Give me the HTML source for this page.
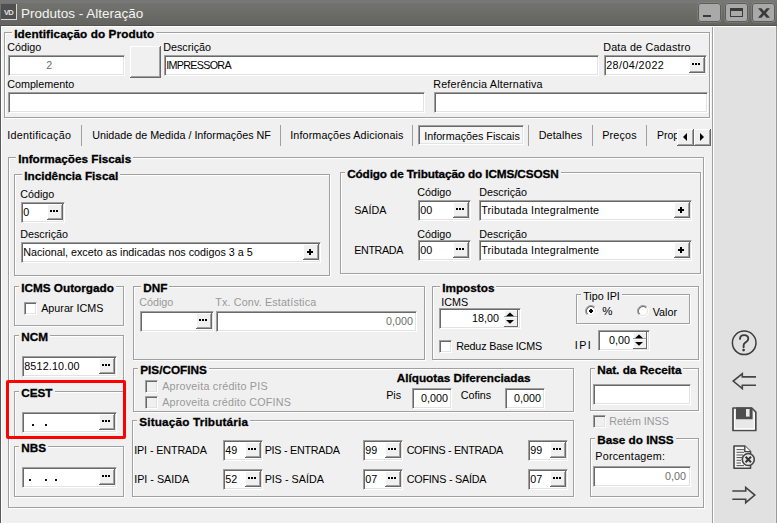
<!DOCTYPE html><html><head><meta charset="utf-8"><style>
*{box-sizing:border-box}
html,body{margin:0;padding:0}
body{width:777px;height:523px;overflow:hidden;position:relative;background:#f0f0f0;font-family:"Liberation Sans",sans-serif;font-size:10.75px;color:#000}
.t,.gt{position:absolute;white-space:nowrap;line-height:1}
.gt{background:#f0f0f0;padding:0 2px}
.gb{position:absolute;border:1px solid #a0a0a0;box-shadow:inset 1px 1px 0 #fff,1px 1px 0 #fff}
.in{position:absolute;background:#fff;border-top:1px solid #a0a0a0;border-left:1px solid #a0a0a0;border-right:1px solid #fff;border-bottom:1px solid #fff;box-shadow:inset 1px 1px 0 #696969,inset -1px -1px 0 #e3e3e3}
.bt{position:absolute;background:#f0f0f0;border-right:1px solid #696969;border-bottom:1px solid #696969;box-shadow:inset 1px 1px 0 #fff,inset -1px -1px 0 #a0a0a0}
.bt i{position:absolute;background:#000;display:block}
.bt .d1,.bt .d2,.bt .d3{width:2px;height:2px;top:6px}
.bt .d1{left:3px}.bt .d2{left:6px}.bt .d3{left:9px}
.bt .ph{left:4px;top:7px;width:6px;height:2px}
.bt .pv{left:6px;top:5px;width:2px;height:6px}
.cb{position:absolute;width:13px;height:13px;background:#fff;border-top:1px solid #a0a0a0;border-left:1px solid #a0a0a0;border-right:1px solid #fff;border-bottom:1px solid #fff;box-shadow:inset 1px 1px 0 #696969,inset -1px -1px 0 #e3e3e3}
.cb.dis{background:#f0f0f0}
.a{position:absolute}
</style></head><body>
<div class="a" style="left:0;top:0;width:777px;height:25px;background:linear-gradient(#777777 0px,#777777 3px,#72736e 3px,#636460 25px)"></div>
<div class="a" style="left:0;top:25px;width:777px;height:1px;background:#535450"></div>
<div class="a" style="left:0;top:26px;width:777px;height:1px;background:#fff"></div>
<div class="a" style="left:1px;top:4px;width:16px;height:16px;background:#505050;border-right:1px solid #d8d8d8;border-bottom:1px solid #d8d8d8"></div>
<div class="t" style="left:4px;top:8.6px;font-size:7.6px;font-weight:bold;color:#e0e0e0;letter-spacing:-0.9px">VD</div>
<div class="t" style="left:21px;top:6.5px;font-size:13.5px;color:#f4f4f4">Produtos - Alteração</div>
<div class="a" style="left:698px;top:3px;width:23px;height:19px;background:#a9a9a9;border:1px solid #5c5c59;border-radius:3px;box-shadow:0 0 0 0.5px #8a8a87"></div>
<div class="a" style="left:725px;top:3px;width:23px;height:19px;background:#a9a9a9;border:1px solid #5c5c59;border-radius:3px;box-shadow:0 0 0 0.5px #8a8a87"></div>
<div class="a" style="left:752px;top:3px;width:23px;height:19px;background:#a9a9a9;border:1px solid #5c5c59;border-radius:3px;box-shadow:0 0 0 0.5px #8a8a87"></div>
<div class="a" style="left:703px;top:15px;width:8px;height:2px;background:#3a3a3a"></div>
<div class="a" style="left:730px;top:8px;width:13px;height:9px;border:1px solid #3a3a3a;border-top-width:3px"></div>
<svg class="a" style="left:757.8px;top:7.9px" width="12" height="10" viewBox="0 0 11.5 9.2"><path d="M0 0 L3.4 0 L5.75 2.9 L8.1 0 L11.5 0 L7.6 4.6 L11.5 9.2 L8.1 9.2 L5.75 6.3 L3.4 9.2 L0 9.2 L3.9 4.6 Z" fill="#3a3a3a"/></svg>
<div class="a" style="left:0;top:26px;width:1px;height:497px;background:#5a5a5a"></div>
<div class="a" style="left:1px;top:27px;width:1px;height:496px;background:#fff"></div>
<div class="a" style="left:712px;top:27px;width:1px;height:496px;background:#a0a0a0"></div>
<div class="a" style="left:713px;top:27px;width:1px;height:496px;background:#fff"></div>
<div class="a" style="left:714px;top:27px;width:61px;height:496px;background:#e1e1e1"></div>
<div class="a" style="left:775px;top:27px;width:1px;height:496px;background:#e6e6e6"></div>
<div class="a" style="left:776px;top:26px;width:1px;height:497px;background:#9a9a9a"></div>
<div class="gb" style="left:4px;top:32px;width:706px;height:86px"></div>
<div class="gt" style="left:12.20px;top:27.65px;font-size:11.75px;letter-spacing:0.1px;font-weight:bold;-webkit-text-stroke:0.3px #000">Identificação do Produto</div>
<div class="t" style="left:7.20px;top:41.90px;font-size:10.75px;color:#000;">Código</div>
<div class="in" style="left:8px;top:55px;width:117px;height:21px"></div>
<div class="t" style="left:46.20px;top:59.90px;font-size:10.75px;color:#6d6d6d;">2</div>
<div class="a" style="left:130px;top:46px;width:31px;height:32px;background:#f0f0f0;border-right:1px solid #696969;border-bottom:1px solid #696969;box-shadow:inset 1px 1px 0 #fff,inset -1px -1px 0 #a0a0a0"></div>
<div class="t" style="left:163.20px;top:41.90px;font-size:10.75px;color:#000;">Descrição</div>
<div class="in" style="left:164px;top:55px;width:435px;height:21px"></div>
<div class="t" style="left:166.20px;top:59.90px;font-size:10.75px;letter-spacing:-0.7px;color:#000;">IMPRESSORA</div>
<div class="t" style="left:603.20px;top:41.90px;font-size:10.75px;letter-spacing:0.2px;color:#000;">Data de Cadastro</div>
<div class="in" style="left:604px;top:55px;width:103px;height:21px"></div>
<div class="t" style="left:606.20px;top:59.90px;font-size:10.75px;letter-spacing:0.42px;color:#000;">28/04/2022</div>
<div class="bt" style="left:689px;top:57px;width:16px;height:16px"><i class="d1"></i><i class="d2"></i><i class="d3"></i></div>
<div class="t" style="left:7.20px;top:78.90px;font-size:10.75px;color:#000;">Complemento</div>
<div class="in" style="left:8px;top:92px;width:417px;height:21px"></div>
<div class="t" style="left:433.20px;top:78.90px;font-size:10.75px;letter-spacing:0.2px;color:#000;">Referência Alternativa</div>
<div class="in" style="left:434px;top:92px;width:274px;height:21px"></div>
<div class="t" style="left:7.20px;top:129.90px;font-size:10.75px;letter-spacing:0.28px;color:#000;">Identificação</div>
<div class="a" style="left:81px;top:125px;width:1px;height:21px;background:#a0a0a0"></div>
<div class="t" style="left:92.20px;top:129.90px;font-size:10.75px;color:#000;">Unidade de Medida / Informações NF</div>
<div class="a" style="left:280px;top:125px;width:1px;height:21px;background:#a0a0a0"></div>
<div class="t" style="left:290.20px;top:129.90px;font-size:10.75px;letter-spacing:0.13px;color:#000;">Informações Adicionais</div>
<div class="a" style="left:412px;top:125px;width:1px;height:21px;background:#a0a0a0"></div>
<div class="a" style="left:418px;top:125px;width:106px;height:20px;background:#f6f6f6;border-top:1px solid #a0a0a0;border-left:1px solid #a0a0a0;border-right:1px solid #fff;border-bottom:1px solid #fff;box-shadow:inset 1px 1px 0 #696969,inset -1px -1px 0 #e3e3e3"></div>
<div class="t" style="left:424.20px;top:130.90px;font-size:10.75px;color:#000;">Informações Fiscais</div>
<div class="a" style="left:528px;top:125px;width:1px;height:21px;background:#a0a0a0"></div>
<div class="t" style="left:538.70px;top:129.90px;font-size:10.75px;letter-spacing:0.15px;color:#000;">Detalhes</div>
<div class="a" style="left:592px;top:125px;width:1px;height:21px;background:#a0a0a0"></div>
<div class="t" style="left:602.20px;top:129.90px;font-size:10.75px;letter-spacing:0.2px;color:#000;">Preços</div>
<div class="a" style="left:646px;top:125px;width:1px;height:21px;background:#a0a0a0"></div>
<div class="a" style="left:650px;top:125px;width:27px;height:20px;overflow:hidden"><div class="t" style="left:7px;top:5.11px;font-size:10.5px">Propriedades</div></div>
<div class="a" style="left:677px;top:129px;width:17px;height:17px;background:#f0f0f0;border-right:1px solid #696969;border-bottom:1px solid #696969;box-shadow:inset 1px 1px 0 #fff,inset -1px -1px 0 #a0a0a0"><svg width="16" height="16" style="position:absolute;left:0;top:0"><path d="M10 4 L10 12 L6 8 Z" fill="#000"/></svg></div>
<div class="a" style="left:694px;top:129px;width:17px;height:17px;background:#f0f0f0;border-right:1px solid #696969;border-bottom:1px solid #696969;box-shadow:inset 1px 1px 0 #fff,inset -1px -1px 0 #a0a0a0"><svg width="16" height="16" style="position:absolute;left:0;top:0"><path d="M6 4 L6 12 L10 8 Z" fill="#000"/></svg></div>
<div class="gb" style="left:8px;top:157px;width:696px;height:351px"></div>
<div class="gt" style="left:16.20px;top:152.65px;font-size:11.75px;letter-spacing:0px;font-weight:bold;-webkit-text-stroke:0.3px #000">Informações Fiscais</div>
<div class="gb" style="left:14px;top:174px;width:316px;height:102px"></div>
<div class="gt" style="left:22.20px;top:169.65px;font-size:11.75px;letter-spacing:0px;font-weight:bold;-webkit-text-stroke:0.3px #000">Incidência Fiscal</div>
<div class="t" style="left:20.20px;top:188.90px;font-size:10.75px;color:#000;">Código</div>
<div class="in" style="left:21px;top:202px;width:44px;height:21px"></div>
<div class="t" style="left:23.20px;top:206.90px;font-size:10.75px;color:#000;">0</div>
<div class="bt" style="left:47px;top:204px;width:16px;height:16px"><i class="d1"></i><i class="d2"></i><i class="d3"></i></div>
<div class="t" style="left:20.20px;top:228.90px;font-size:10.75px;color:#000;">Descrição</div>
<div class="in" style="left:21px;top:242px;width:300px;height:21px"></div>
<div class="t" style="left:23.20px;top:246.90px;font-size:10.75px;color:#000;">Nacional, exceto as indicadas nos codigos 3 a 5</div>
<div class="bt" style="left:303px;top:244px;width:16px;height:16px"><i class="ph"></i><i class="pv"></i></div>
<div class="gb" style="left:340px;top:172px;width:361px;height:102px"></div>
<div class="gt" style="left:345.20px;top:167.65px;font-size:11.75px;letter-spacing:-0.12px;font-weight:bold;-webkit-text-stroke:0.3px #000">Código de Tributação do ICMS/CSOSN</div>
<div class="t" style="left:417.20px;top:186.90px;font-size:10.75px;color:#000;">Código</div>
<div class="t" style="left:479.20px;top:186.90px;font-size:10.75px;color:#000;">Descrição</div>
<div class="t" style="left:354.20px;top:204.90px;font-size:10.75px;color:#000;">SAÍDA</div>
<div class="in" style="left:418px;top:200px;width:53px;height:21px"></div>
<div class="t" style="left:420.20px;top:204.90px;font-size:10.75px;color:#000;">00</div>
<div class="bt" style="left:453px;top:202px;width:16px;height:16px"><i class="d1"></i><i class="d2"></i><i class="d3"></i></div>
<div class="in" style="left:479px;top:200px;width:213px;height:21px"></div>
<div class="t" style="left:481.20px;top:204.90px;font-size:10.75px;letter-spacing:0.19px;color:#000;">Tributada Integralmente</div>
<div class="bt" style="left:674px;top:202px;width:16px;height:16px"><i class="ph"></i><i class="pv"></i></div>
<div class="t" style="left:417.20px;top:228.90px;font-size:10.75px;color:#000;">Código</div>
<div class="t" style="left:479.20px;top:228.90px;font-size:10.75px;color:#000;">Descrição</div>
<div class="t" style="left:354.20px;top:244.90px;font-size:10.75px;letter-spacing:-0.36px;color:#000;">ENTRADA</div>
<div class="in" style="left:418px;top:240px;width:53px;height:21px"></div>
<div class="t" style="left:420.20px;top:244.90px;font-size:10.75px;color:#000;">00</div>
<div class="bt" style="left:453px;top:242px;width:16px;height:16px"><i class="d1"></i><i class="d2"></i><i class="d3"></i></div>
<div class="in" style="left:479px;top:240px;width:213px;height:21px"></div>
<div class="t" style="left:481.20px;top:244.90px;font-size:10.75px;letter-spacing:0.19px;color:#000;">Tributada Integralmente</div>
<div class="bt" style="left:674px;top:242px;width:16px;height:16px"><i class="ph"></i><i class="pv"></i></div>
<div class="gb" style="left:14px;top:286px;width:110px;height:40px"></div>
<div class="gt" style="left:19.20px;top:281.65px;font-size:11.75px;letter-spacing:0px;font-weight:bold;-webkit-text-stroke:0.3px #000">ICMS Outorgado</div>
<div class="cb" style="left:24px;top:302px"></div>
<div class="t" style="left:41.20px;top:302.90px;font-size:10.75px;color:#000;">Apurar ICMS</div>
<div class="gb" style="left:14px;top:335px;width:110px;height:47px"></div>
<div class="gt" style="left:19.20px;top:330.65px;font-size:11.75px;letter-spacing:0px;font-weight:bold;-webkit-text-stroke:0.3px #000">NCM</div>
<div class="in" style="left:22px;top:356px;width:95px;height:21px"></div>
<div class="t" style="left:24.20px;top:360.90px;font-size:10.75px;letter-spacing:0.17px;color:#000;">8512.10.00</div>
<div class="bt" style="left:99px;top:358px;width:16px;height:16px"><i class="d1"></i><i class="d2"></i><i class="d3"></i></div>
<div class="gb" style="left:14px;top:391px;width:110px;height:46px"></div>
<div class="gt" style="left:19.20px;top:386.65px;font-size:11.75px;letter-spacing:0px;font-weight:bold;-webkit-text-stroke:0.3px #000">CEST</div>
<div class="in" style="left:22px;top:412px;width:95px;height:21px"></div>
<div class="bt" style="left:99px;top:414px;width:16px;height:16px"><i class="d1"></i><i class="d2"></i><i class="d3"></i></div>
<div class="a" style="left:32px;top:424px;width:1.5px;height:2px;background:#112"></div>
<div class="a" style="left:45px;top:424px;width:1.5px;height:2px;background:#112"></div>
<div class="gb" style="left:14px;top:446px;width:110px;height:51px"></div>
<div class="gt" style="left:19.20px;top:441.65px;font-size:11.75px;letter-spacing:0px;font-weight:bold;-webkit-text-stroke:0.3px #000">NBS</div>
<div class="in" style="left:22px;top:467px;width:95px;height:21px"></div>
<div class="bt" style="left:99px;top:469px;width:16px;height:16px"><i class="d1"></i><i class="d2"></i><i class="d3"></i></div>
<div class="a" style="left:29px;top:479px;width:1.5px;height:2px;background:#112"></div>
<div class="a" style="left:45px;top:479px;width:1.5px;height:2px;background:#112"></div>
<div class="a" style="left:55px;top:479px;width:1.5px;height:2px;background:#112"></div>
<div class="gb" style="left:133px;top:286px;width:292px;height:74px"></div>
<div class="gt" style="left:141.20px;top:281.65px;font-size:11.75px;letter-spacing:0px;font-weight:bold;-webkit-text-stroke:0.3px #000">DNF</div>
<div class="t" style="left:139.20px;top:296.90px;font-size:10.75px;color:#999;">Código</div>
<div class="t" style="left:215.20px;top:296.90px;font-size:10.75px;letter-spacing:0.16px;color:#999;">Tx. Conv. Estatística</div>
<div class="in" style="left:140px;top:311px;width:74px;height:21px"></div>
<div class="bt" style="left:196px;top:313px;width:16px;height:16px"><i class="d1"></i><i class="d2"></i><i class="d3"></i></div>
<div class="in" style="left:216px;top:311px;width:201px;height:21px"></div>
<div class="t" style="right:364px;top:315.90px;font-size:10.75px;color:#6d6d6d">0,000</div>
<div class="gb" style="left:432px;top:286px;width:267px;height:74px"></div>
<div class="gt" style="left:440.20px;top:281.65px;font-size:11.75px;letter-spacing:0px;font-weight:bold;-webkit-text-stroke:0.3px #000">Impostos</div>
<div class="t" style="left:441.20px;top:296.90px;font-size:10.75px;color:#000;">ICMS</div>
<div class="in" style="left:439px;top:308px;width:82px;height:21px"></div>
<div class="t" style="right:278px;top:312.90px;font-size:10.75px;color:#000">18,00</div>
<div class="gb" style="left:576px;top:294px;width:114px;height:30px"></div>
<div class="gt" style="left:581.20px;top:290.50px;font-size:10.75px;letter-spacing:0px;font-weight:normal">Tipo IPI</div>
<div class="cb" style="left:439px;top:340px"></div>
<div class="t" style="left:456.20px;top:340.90px;font-size:10.75px;letter-spacing:-0.18px;color:#000;">Reduz Base ICMS</div>
<div class="t" style="left:574.70px;top:339.90px;font-size:10.75px;letter-spacing:1.5px;color:#000;">IPI</div>
<div class="in" style="left:598px;top:330px;width:52px;height:21px"></div>
<div class="t" style="right:147px;top:335.40px;font-size:10.75px;color:#000">0,00</div>
<div class="gb" style="left:133px;top:368px;width:441px;height:44px"></div>
<div class="gt" style="left:138.20px;top:363.65px;font-size:11.75px;letter-spacing:0px;font-weight:bold;-webkit-text-stroke:0.3px #000">PIS/COFINS</div>
<div class="cb dis" style="left:145px;top:380px"></div>
<div class="t" style="left:162.20px;top:380.90px;font-size:10.75px;letter-spacing:0.22px;color:#999;">Aproveita crédito PIS</div>
<div class="cb dis" style="left:145px;top:396px"></div>
<div class="t" style="left:162.20px;top:396.90px;font-size:10.75px;letter-spacing:0.19px;color:#999;">Aproveita crédito COFINS</div>
<div class="t" style="left:396.70px;top:372.05px;font-size:11.75px;font-weight:bold;-webkit-text-stroke:0.3px #000;color:#000;">Alíquotas Diferenciadas</div>
<div class="t" style="left:386.20px;top:389.90px;font-size:10.75px;color:#000;">Pis</div>
<div class="in" style="left:412px;top:388px;width:40px;height:21px"></div>
<div class="t" style="right:329px;top:392.90px;font-size:10.75px;color:#000">0,000</div>
<div class="t" style="left:460.70px;top:389.90px;font-size:10.75px;color:#000;">Cofins</div>
<div class="in" style="left:505px;top:388px;width:40px;height:21px"></div>
<div class="t" style="right:236px;top:392.90px;font-size:10.75px;color:#000">0,000</div>
<div class="gb" style="left:132px;top:420px;width:442px;height:77px"></div>
<div class="gt" style="left:137.20px;top:415.65px;font-size:11.75px;letter-spacing:0.17px;font-weight:bold;-webkit-text-stroke:0.3px #000">Situação Tributária</div>
<div class="t" style="left:134.20px;top:444.90px;font-size:10.75px;letter-spacing:-0.11px;color:#000;">IPI - ENTRADA</div>
<div class="in" style="left:223px;top:440px;width:40px;height:21px"></div>
<div class="t" style="left:225.20px;top:444.90px;font-size:10.75px;color:#000;">49</div>
<div class="bt" style="left:245px;top:442px;width:16px;height:16px"><i class="d1"></i><i class="d2"></i><i class="d3"></i></div>
<div class="t" style="left:264.70px;top:444.90px;font-size:10.75px;letter-spacing:-0.25px;color:#000;">PIS - ENTRADA</div>
<div class="in" style="left:363px;top:440px;width:40px;height:21px"></div>
<div class="t" style="left:365.20px;top:444.90px;font-size:10.75px;color:#000;">99</div>
<div class="bt" style="left:385px;top:442px;width:16px;height:16px"><i class="d1"></i><i class="d2"></i><i class="d3"></i></div>
<div class="t" style="left:406.70px;top:444.90px;font-size:10.75px;letter-spacing:-0.33px;color:#000;">COFINS - ENTRADA</div>
<div class="in" style="left:528px;top:440px;width:40px;height:21px"></div>
<div class="t" style="left:530.20px;top:444.90px;font-size:10.75px;color:#000;">99</div>
<div class="bt" style="left:550px;top:442px;width:16px;height:16px"><i class="d1"></i><i class="d2"></i><i class="d3"></i></div>
<div class="t" style="left:134.20px;top:473.90px;font-size:10.75px;color:#000;">IPI - SAIDA</div>
<div class="in" style="left:223px;top:469px;width:40px;height:21px"></div>
<div class="t" style="left:225.20px;top:473.90px;font-size:10.75px;color:#000;">52</div>
<div class="bt" style="left:245px;top:471px;width:16px;height:16px"><i class="d1"></i><i class="d2"></i><i class="d3"></i></div>
<div class="t" style="left:264.70px;top:473.90px;font-size:10.75px;color:#000;">PIS - SAÍDA</div>
<div class="in" style="left:363px;top:469px;width:40px;height:21px"></div>
<div class="t" style="left:365.20px;top:473.90px;font-size:10.75px;color:#000;">07</div>
<div class="bt" style="left:385px;top:471px;width:16px;height:16px"><i class="d1"></i><i class="d2"></i><i class="d3"></i></div>
<div class="t" style="left:406.70px;top:473.90px;font-size:10.75px;letter-spacing:-0.2px;color:#000;">COFINS - SAÍDA</div>
<div class="in" style="left:528px;top:469px;width:40px;height:21px"></div>
<div class="t" style="left:530.20px;top:473.90px;font-size:10.75px;color:#000;">07</div>
<div class="bt" style="left:550px;top:471px;width:16px;height:16px"><i class="d1"></i><i class="d2"></i><i class="d3"></i></div>
<div class="gb" style="left:590px;top:368px;width:109px;height:43px"></div>
<div class="gt" style="left:595.20px;top:363.65px;font-size:11.75px;letter-spacing:0px;font-weight:bold;-webkit-text-stroke:0.3px #000">Nat. da Receita</div>
<div class="in" style="left:593px;top:384px;width:98px;height:21px"></div>
<div class="cb dis" style="left:593px;top:415px"></div>
<div class="t" style="left:609.20px;top:416.40px;font-size:10.75px;color:#999;">Retém INSS</div>
<div class="gb" style="left:590px;top:438px;width:109px;height:59px"></div>
<div class="gt" style="left:595.20px;top:433.65px;font-size:11.75px;letter-spacing:0px;font-weight:bold;-webkit-text-stroke:0.3px #000">Base do INSS</div>
<div class="t" style="left:595.20px;top:450.90px;font-size:10.75px;letter-spacing:0.27px;color:#000;">Porcentagem:</div>
<div class="in" style="left:593px;top:466px;width:98px;height:21px"></div>
<div class="t" style="right:91px;top:470.90px;font-size:10.75px;color:#6d6d6d">0,00</div>
<svg class="a" style="left:585px;top:305px" width="12" height="12" viewBox="0 0 12 12"><circle cx="6" cy="6" r="5" fill="#fff"/><path d="M2.1 9.9 A5.5 5.5 0 0 1 9.9 2.1" stroke="#a0a0a0" stroke-width="1" fill="none"/><path d="M2.8 9.2 A4.5 4.5 0 0 1 9.2 2.8" stroke="#696969" stroke-width="1.1" fill="none"/><path d="M9.9 2.1 A5.5 5.5 0 0 1 2.1 9.9" stroke="#fff" stroke-width="1" fill="none"/><path d="M9.2 2.8 A4.5 4.5 0 0 1 2.8 9.2" stroke="#e3e3e3" stroke-width="1" fill="none"/><rect x="4" y="5" width="4" height="2" fill="#000"/><rect x="5" y="4" width="2" height="4" fill="#000"/></svg>
<div class="t" style="left:602.20px;top:306.27px;font-size:11.5px;color:#000;">%</div>
<svg class="a" style="left:637px;top:305px" width="12" height="12" viewBox="0 0 12 12"><circle cx="6" cy="6" r="5" fill="#fff"/><path d="M2.1 9.9 A5.5 5.5 0 0 1 9.9 2.1" stroke="#a0a0a0" stroke-width="1" fill="none"/><path d="M2.8 9.2 A4.5 4.5 0 0 1 9.2 2.8" stroke="#696969" stroke-width="1.1" fill="none"/><path d="M9.9 2.1 A5.5 5.5 0 0 1 2.1 9.9" stroke="#fff" stroke-width="1" fill="none"/><path d="M9.2 2.8 A4.5 4.5 0 0 1 2.8 9.2" stroke="#e3e3e3" stroke-width="1" fill="none"/></svg>
<div class="t" style="left:652.70px;top:306.90px;font-size:10.75px;color:#000;">Valor</div>
<div class="a" style="left:504px;top:310px;width:14px;height:17px;background:#f0f0f0;border-right:1px solid #696969;border-bottom:1px solid #696969;box-shadow:inset 1px 1px 0 #fff"><div class="a" style="left:0;top:6px;width:13px;height:1px;background:#a0a0a0"></div><div class="a" style="left:0;top:7px;width:13px;height:1px;background:#fff"></div><svg width="13" height="16" style="position:absolute;left:0;top:0"><path d="M2 6.2 L10 6.2 L6 2.4 Z" fill="#000"/><path d="M2 10 L10 10 L6 13.8 Z" fill="#000"/></svg></div>
<div class="a" style="left:633px;top:332px;width:14px;height:17px;background:#f0f0f0;border-right:1px solid #696969;border-bottom:1px solid #696969;box-shadow:inset 1px 1px 0 #fff"><div class="a" style="left:0;top:6px;width:13px;height:1px;background:#a0a0a0"></div><div class="a" style="left:0;top:7px;width:13px;height:1px;background:#fff"></div><svg width="13" height="16" style="position:absolute;left:0;top:0"><path d="M2 6.2 L10 6.2 L6 2.4 Z" fill="#000"/><path d="M2 10 L10 10 L6 13.8 Z" fill="#000"/></svg></div>
<svg class="a" style="left:714px;top:320px" width="62" height="200" viewBox="714 320 62 200"><circle cx="744.2" cy="342.8" r="11.8" fill="none" stroke="#3c3c3c" stroke-width="1.5"/><path d="M740 338.9 C740 336.3 741.8 335.1 744.1 335.1 C746.5 335.1 748.3 336.6 748.3 338.7 C748.3 340.8 746.7 341.7 745.3 342.6 C744.1 343.5 743.6 344.4 743.6 345.6 L743.6 347.2" fill="none" stroke="#3c3c3c" stroke-width="1.9" stroke-linecap="round"/><circle cx="743.6" cy="350.1" r="1.35" fill="#3c3c3c"/><path d="M756 376.9 L742.3 376.9 L742.3 373.6 L733.2 381.1 L742.3 388.6 L742.3 385.3 L756 385.3" fill="none" stroke="#444" stroke-width="1.6" stroke-linejoin="miter"/><path d="M733 408 L751.8 408 L755.8 412 L755.8 430.5 L733 430.5 Z" fill="#e8e8e8" stroke="#4a4a4a" stroke-width="1.7" stroke-linejoin="round"/><path d="M734.6 409.4 L734.6 428.9 L754.2 428.9 L754.2 413" fill="none" stroke="#fff" stroke-width="1.1"/><path d="M736 407.5 L751.5 407.5 L752.6 408.6 L752.6 419.3 L736 419.3 Z" fill="#4d4d4d"/><rect x="746" y="409" width="3.6" height="7.6" fill="#eaeaea"/><path d="M734 446 L744.8 446 L750.5 451.6 L750.5 468.3 L734 468.3 Z" fill="#f4f4f4" stroke="#444" stroke-width="1.6" stroke-linejoin="round"/><path d="M744.8 446 L744.8 451.6 L750.5 451.6" fill="#fff" stroke="#444" stroke-width="1.4"/><path d="M736.5 449.6 H744 M736.5 452.3 H744 M736.5 455 H743 M736.5 457.6 H742 M736.5 460.3 H741 M736.5 463 H741 M736.5 465.6 H744" stroke="#555" stroke-width="1"/><circle cx="748.3" cy="459.5" r="6" fill="#e8e8e8" stroke="#444" stroke-width="1.6"/><path d="M745.6 456.8 L751 462.2 M751 456.8 L745.6 462.2" stroke="#333" stroke-width="2"/><path d="M732.3 491 L745.7 491 L745.7 487.4 L754.8 495.1 L745.7 502.7 L745.7 499.3 L732.3 499.3" fill="none" stroke="#444" stroke-width="1.6" stroke-linejoin="miter"/></svg>
<div class="a" style="left:6px;top:380px;width:120px;height:59px;border:3px solid #ff0000;border-radius:2px"></div>
</body></html>
